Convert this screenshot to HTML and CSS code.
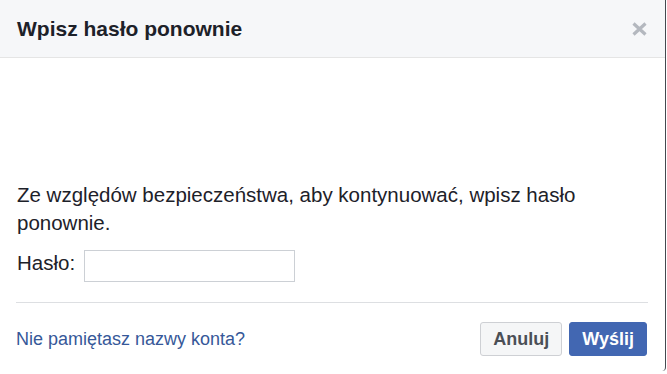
FILE: index.html
```html
<!DOCTYPE html>
<html lang="pl">
<head>
<meta charset="utf-8">
<title>Wpisz hasło ponownie</title>
<link rel="stylesheet" href="styles.css">
</head>
<body>
<div class="dialog">
  <div class="header">
    <h2 class="title">Wpisz hasło ponownie</h2>
    <span class="close" aria-label="Zamknij">
      <svg width="15" height="14" viewBox="0 0 15 14"><path d="M1.5 1.5 L13.5 12.5 M13.5 1.5 L1.5 12.5" stroke="#b4b8bf" stroke-width="3.2" stroke-linecap="butt"/></svg>
    </span>
  </div>
  <div class="content">
    <p class="message">Ze względów bezpieczeństwa, aby kontynuować, wpisz hasło ponownie.</p>
    <div class="field">
      <label class="label" for="pw">Hasło:</label>
      <input class="input" id="pw" type="password">
    </div>
    <div class="divider"></div>
    <div class="footer">
      <a class="link" href="#">Nie pamiętasz nazwy konta?</a>
      <div class="buttons">
        <button class="btn btn-cancel">Anuluj</button>
        <button class="btn btn-primary">Wyślij</button>
      </div>
    </div>
  </div>
</div>
</body>
</html>
```
FILE: styles.css
```css
html, body {
  margin: 0;
  padding: 0;
  background: #ffffff;
}
body {
  font-family: "Liberation Sans", Arial, Helvetica, sans-serif;
  color: #1d2129;
}
.dialog {
  width: 665px;
  height: 371px;
  border-right: 1px solid #444950;
  border-bottom-right-radius: 4px;
  background: #ffffff;
  overflow: hidden;
}
.header {
  height: 57px;
  background: #f6f7f9;
  border-bottom: 1px solid #e5e5e5;
  display: flex;
  align-items: center;
  justify-content: space-between;
  padding: 0 18px 0 17px;
}
.title {
  margin: 0;
  font-size: 21px;
  font-weight: bold;
  line-height: 57px;
  color: #1d2129;
}
.close {
  display: flex;
  width: 15px;
  height: 14px;
}
.content {
  padding: 0 17px 0 16px;
}
.message {
  margin: 123px 0 0 1px;
  font-size: 20.5px;
  line-height: 28px;
  color: #1d2129;
}
.field {
  display: flex;
  align-items: flex-start;
  margin-top: 12px;
  margin-left: 1px;
}
.label {
  font-size: 20.5px;
  line-height: 28px;
  color: #1d2129;
  margin-right: 9px;
}
.input {
  margin: 1px 0 0 0;
  width: 211px;
  height: 32px;
  box-sizing: border-box;
  border: 1px solid #ccd0d5;
  padding: 0 6px;
  font-size: 18px;
  outline: none;
}
.divider {
  height: 1px;
  background: #dddfe2;
  margin-top: 20px;
}
.footer {
  display: flex;
  align-items: center;
  justify-content: space-between;
  margin-top: 19px;
  padding-right: 1px;
}
.link {
  font-size: 18px;
  line-height: 24px;
  color: #365899;
  text-decoration: none;
}
.buttons {
  display: flex;
  gap: 7px;
}
.btn {
  height: 34px;
  box-sizing: border-box;
  border: 1px solid;
  border-radius: 3px;
  padding: 0 12px;
  font-family: "Liberation Sans", Arial, Helvetica, sans-serif;
  font-size: 18px;
  font-weight: bold;
  line-height: 32px;
  cursor: pointer;
}
.btn-cancel {
  background: #f5f6f7;
  border-color: #ced0d4;
  color: #4b4f56;
}
.btn-primary {
  background: #4267b2;
  border-color: #4267b2;
  color: #ffffff;
}
```
